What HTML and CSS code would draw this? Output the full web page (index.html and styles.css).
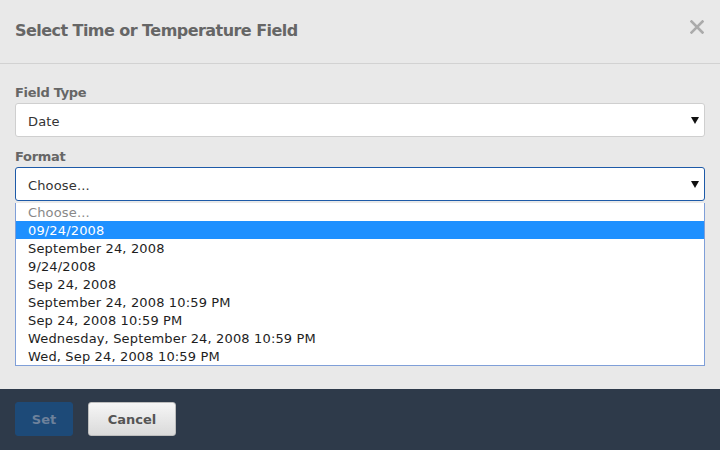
FILE: index.html
```html
<!DOCTYPE html>
<html>
<head>
<meta charset="utf-8">
<link rel="stylesheet" href="styles.css">
</head>
<body>
<div class="modal">
  <div class="modal-header">
    <h1 class="title">Select Time or Temperature Field</h1>
    <svg class="close" width="14" height="14" viewBox="0 0 14 14" aria-label="Close">
      <path d="M1.5 1.5 L12.5 12.5 M12.5 1.5 L1.5 12.5" stroke="#ababab" stroke-width="2.6" stroke-linecap="square" fill="none"/>
    </svg>
  </div>
  <div class="modal-body">
    <label class="label">Field Type</label>
    <div class="select"><span>Date</span><span class="arrow"></span></div>
    <label class="label label-second">Format</label>
    <div class="select focused"><span>Choose...</span><span class="arrow"></span></div>
    <ul class="options">
      <li class="placeholder">Choose...</li>
      <li class="selected">09/24/2008</li>
      <li>September 24, 2008</li>
      <li>9/24/2008</li>
      <li>Sep 24, 2008</li>
      <li>September 24, 2008 10:59 PM</li>
      <li>Sep 24, 2008 10:59 PM</li>
      <li>Wednesday, September 24, 2008 10:59 PM</li>
      <li>Wed, Sep 24, 2008 10:59 PM</li>
    </ul>
  </div>
  <div class="modal-footer">
    <button class="btn btn-set">Set</button>
    <button class="btn btn-cancel">Cancel</button>
  </div>
</div>
</body>
</html>
```
FILE: styles.css
```css
* { box-sizing: border-box; }
html, body { margin: 0; padding: 0; }
body {
  width: 720px;
  height: 450px;
  background: #e9e9e9;
  font-family: "DejaVu Sans", sans-serif;
  overflow: hidden;
}
.modal { display: flex; flex-direction: column; height: 450px; }
.modal-header {
  height: 64px;
  border-bottom: 1px solid #d2d2d2;
  padding: 0 16px 0 15px;
  display: flex;
  align-items: center;
  justify-content: space-between;
}
.title {
  margin: 0;
  font-size: 16px;
  font-weight: bold;
  color: #666;
  letter-spacing: -0.55px;
  margin-top: -3px;
}
.close {
  display: block;
  margin-top: -10px;
}
.modal-body {
  padding: 20px 15px 0;
  height: 325px;
}
.label {
  display: block;
  font-size: 13px;
  line-height: 16px;
  padding-top: 1px;
  font-weight: bold;
  color: #666;
  margin-bottom: 2px;
  letter-spacing: -0.3px;
}
.label-second { margin-top: 11px; }
.select {
  height: 34px;
  background: #fff;
  border: 1px solid #cfcfcf;
  border-radius: 3px;
  display: flex;
  align-items: center;
  justify-content: space-between;
  padding: 2px 5px 0 12px;
  font-size: 13px;
  color: #333;
  letter-spacing: 0.15px;
}
.select.focused { border-color: #1d5aa8; }
.arrow {
  width: 0; height: 0;
  border-left: 4px solid transparent;
  border-right: 4px solid transparent;
  border-top: 7px solid #111;
  margin-top: -1px;
}
.options {
  list-style: none;
  margin: 2px 0 0;
  padding: 0;
  background: #fff;
  border: 1px solid #7f9fd8;
  border-top: none;
}
.options li {
  height: 18px;
  line-height: 18px;
  padding: 1px 0 0 12px;
  font-size: 13px;
  color: #1e1e1e;
  letter-spacing: 0.15px;
}
.options li.placeholder { color: #888; }
.options li.selected { background: #1e90ff; color: #fff; }
.modal-footer {
  flex: 1;
  background: #2e3a4a;
  padding: 13px 15px 0;
  display: flex;
  gap: 15px;
  align-items: flex-start;
}
.btn {
  height: 34px;
  border-radius: 3px;
  font-family: "DejaVu Sans", sans-serif;
  font-size: 13px;
  font-weight: bold;
  padding: 1px 0 0;
}
.btn-set {
  width: 58px;
  background: #1d4a78;
  border: 1px solid #1d4a78;
  color: #6d819b;
}
.btn-cancel {
  width: 88px;
  background: linear-gradient(#f6f6f6, #dadada);
  border: 1px solid #bdbdbd;
  color: #555;
}
```
